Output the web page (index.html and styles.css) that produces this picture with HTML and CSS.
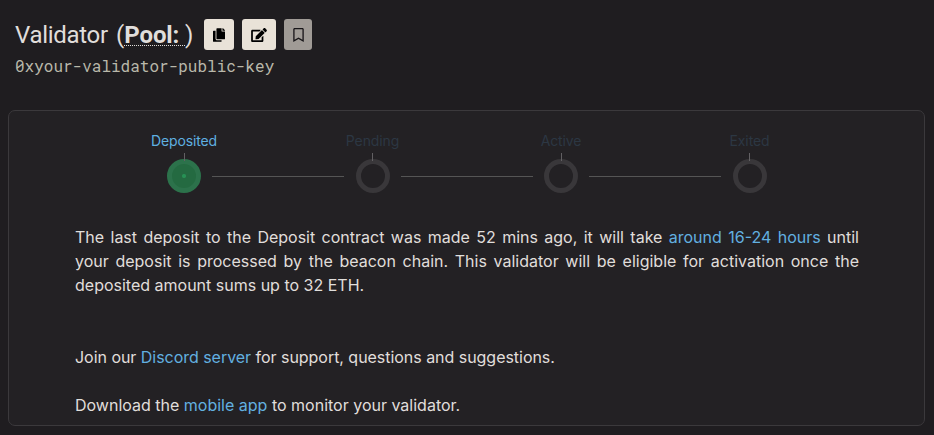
FILE: index.html
```html
<!DOCTYPE html>
<html lang="en">
<head>
<meta charset="utf-8">
<title>Validator</title>
<link rel="stylesheet" href="styles.css">
</head>
<body>
<header class="head">
  <div class="title-row">
    <h1 class="title"><span class="name">Validator</span><span class="pool-wrap">(<span class="pool">Pool: </span>)</span></h1>
    <button class="btn" aria-label="Copy"><svg width="12" height="14" viewBox="0 0 448 512"><path d="M320 448v40c0 13-11 24-24 24H24c-13 0-24-11-24-24V120c0-13 11-24 24-24h72v296c0 31 25 56 56 56zm0-344V0H152c-13 0-24 11-24 24v368c0 13 11 24 24 24h272c13 0 24-11 24-24V128H344c-13 0-24-11-24-24zm121-31L375 7a24 24 0 0 0-17-7h-6v96h96v-6a24 24 0 0 0-7-17z"/></svg></button>
    <button class="btn" aria-label="Edit"><svg width="16" height="14" viewBox="0 0 576 512"><path d="M402.600 83.200l90.200 90.200c3.800 3.800 3.800 10 0 13.800L274.400 405.600l-92.800 10.300c-12.400 1.400-22.900-9.100-21.500-21.500l10.300-92.800L388.800 83.200c3.800-3.800 10-3.800 13.800 0zm162-22.900l-48.800-48.800c-15.200-15.200-39.900-15.200-55.200 0l-35.400 35.400c-3.800 3.800-3.800 10 0 13.800l90.200 90.200c3.800 3.800 10 3.800 13.800 0l35.400-35.400c15.200-15.300 15.200-40 0-55.200zM384 346.200V448H64V128h229.800c3.200 0 6.200-1.300 8.500-3.500l40-40c7.600-7.600 2.200-20.500-8.500-20.500H48C21.500 64 0 85.500 0 112v352c0 26.500 21.500 48 48 48h352c26.500 0 48-21.500 48-48V306.200c0-10.700-12.900-16-20.500-8.500l-40 40c-2.200 2.300-3.500 5.300-3.500 8.500z"/></svg></button>
    <button class="btn btn-muted" aria-label="Bookmark"><svg width="11" height="14" viewBox="0 0 384 512"><path d="M336 0H48C21.500 0 0 21.500 0 48v464l192-112 192 112V48c0-26.500-21.500-48-48-48zm0 428.400l-144-84-144 84V54a6 6 0 0 1 6-6h276c3.300 0 6 2.700 6 6v374.400z"/></svg></button>
  </div>
  <div class="key">0xyour-validator-public-key</div>
</header>
<main class="card">
  <div class="steps">
    <div class="step done"><span class="label">Deposited</span><i class="tick"></i><i class="ring"></i></div>
    <i class="line"></i>
    <div class="step"><span class="label">Pending</span><i class="tick"></i><i class="ring"></i></div>
    <i class="line"></i>
    <div class="step"><span class="label">Active</span><i class="tick"></i><i class="ring"></i></div>
    <i class="line"></i>
    <div class="step"><span class="label">Exited</span><i class="tick"></i><i class="ring"></i></div>
  </div>
  <div class="copy">
    <p class="info">The last deposit to the Deposit contract was made 52 mins ago, it will take <a>around 16-24 hours</a> until your deposit is processed by the beacon chain. This validator will be eligible for activation once the deposited amount sums up to 32 ETH.</p>
    <p class="join">Join our <a>Discord server</a> for support, questions and suggestions.</p>
    <p>Download the <a>mobile app</a> to monitor your validator.</p>
  </div>
</main>
</body>
</html>
```
FILE: styles.css
```css
* { box-sizing: border-box; }
body { margin: 0; height: 435px; overflow: hidden; background: #1f1d20; color: #e0dedb; font: 16px/24px Inter, sans-serif; }
.head { padding: 19px 15px 0; height: 110px; }
.title-row { display: flex; align-items: center; height: 31px; }
.title { display: flex; width: 189px; margin: 0; padding-top: 1px; font: 400 24px/31px Roboto, sans-serif; white-space: pre; }
.name { width: 101px; letter-spacing: -0.3px; }
.pool { font-weight: 700; letter-spacing: -0.1px; background: repeating-linear-gradient(90deg, #e0dedb 0 1px, transparent 1px 2px) 0 24px / 100% 1px no-repeat; }
.btn { display: flex; align-items: center; justify-content: center; width: 30px; height: 31px; margin: 0 8px 0 0; padding: 0; border: 0; border-radius: 3px; background: #e9e2d8; color: #000; }
.btn:nth-of-type(2) { width: 34px; }
.btn-muted { width: 28px; background: #a09b96; color: #171518; }
.btn svg { fill: currentColor; }
.key { margin-top: 4px; font: 16px/24px "Roboto Mono", "DejaVu Sans Mono", monospace; color: #b9b8aa; }
.card { width: 917px; height: 316px; margin-left: 8px; border: 1px solid #3b393c; border-radius: 7px; background: #232124; }
.steps { display: flex; height: 84px; padding: 18px 0 0 141px; }
.step { display: flex; flex: none; flex-direction: column; align-items: center; width: 68px; color: #2c3743; font-size: 14px; }
.label { line-height: 24px; letter-spacing: -0.12px; }
.tick { position: relative; z-index: 1; width: 1px; height: 8px; margin-bottom: -2px; background: #626063; }
.ring { width: 34px; height: 34px; border: 5px solid #39373a; border-radius: 50%; }
.done { color: #5fb0e0; }
.done .ring { border-color: #2c724b; background: radial-gradient(circle, #279155 0 1.5px, #246a41 2.5px); }
.line { flex: none; width: 132px; height: 1px; margin: 47px -5.76px 0; background: #555; }
.copy { width: 784px; margin: 30px 0 0 66px; }
.copy p { margin: 0 0 24px; }
.copy .info { text-align: justify; margin-bottom: 48px; }
.copy .join { letter-spacing: -0.035px; }
a { color: #62b0e0; }
```
